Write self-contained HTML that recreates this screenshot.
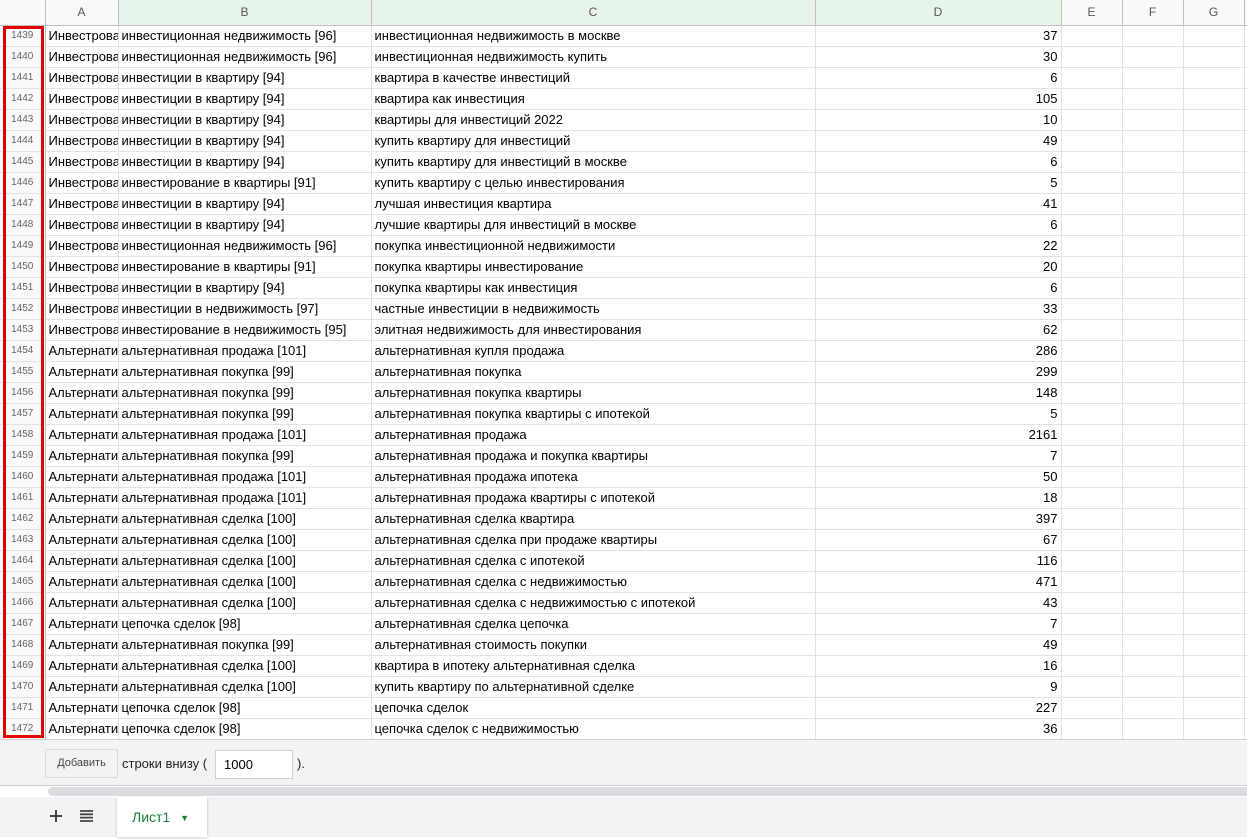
<!DOCTYPE html><html><head><meta charset="utf-8"><style>
*{margin:0;padding:0;box-sizing:border-box}
body{width:1247px;height:837px;overflow:hidden;background:#fff;font-family:"Liberation Sans",Arial,sans-serif;position:relative}
table{border-collapse:collapse;table-layout:fixed;position:absolute;left:0;top:0;width:1247px}
td{height:21px;border-right:1px solid #e2e3e3;border-bottom:1px solid #e2e3e3;font-size:13px;color:#000;white-space:nowrap;overflow:hidden;padding:0 3px;line-height:20px;vertical-align:middle}
td.n{font-size:10px;color:#666;text-align:center;background:#f8f9fa;border-right:1px solid #c0c0c0;padding:0;line-height:20px}
td.r{text-align:right}
tr.h td{height:25px;background:#f8f9fa;color:#555;text-align:center;font-size:12px;border-bottom:1px solid #c0c0c0;border-right:1px solid #c0c0c0;line-height:23px}
tr.h td.g{background:#e6f4ea}
td.a{padding:0 0 0 3px;text-overflow:clip}
#red{position:absolute;left:3px;top:26px;width:41px;height:712px;border:3px solid #e00000}
#bot{position:absolute;left:0;top:739px;width:1247px;height:47px;background:#f3f3f3;border-top:1px solid #d0d0d0;border-bottom:1px solid #d0d0d0}
#btn{position:absolute;left:45px;top:9px;width:73px;height:29px;border:1px solid #dadada;background:#f3f3f3;font-size:11px;color:#444;text-align:center;line-height:27px;border-radius:2px}
#t1{position:absolute;left:122px;top:16px;font-size:13px;color:#222}
#inp{position:absolute;left:215px;top:10px;width:78px;height:29px;border:1px solid #d0d0d0;background:#fff;font-size:13px;padding-left:8px;line-height:27px}
#t2{position:absolute;left:297px;top:16px;font-size:13px;color:#222}
#sc{position:absolute;left:0;top:786px;width:1247px;height:11px;background:#fff}
#bar{position:absolute;left:48px;top:1px;width:1199px;height:9px;background:#dadce0;border-radius:5px 0 0 5px}
#tabs{position:absolute;left:0;top:797px;width:1247px;height:40px;background:#f1f3f4}
#tab{position:absolute;left:117px;top:0;width:90px;height:40px;background:#fff;box-shadow:0 1px 3px rgba(0,0,0,.2);color:#188038;font-size:14px;line-height:40px;padding-left:15px}
</style></head><body>
<table>
<colgroup><col style="width:45px"><col style="width:73px"><col style="width:253px"><col style="width:444px"><col style="width:246px"><col style="width:61px"><col style="width:61px"><col style="width:61px"><col style="width:3px"></colgroup>
<tr class="h"><td class="n" style="background:#f8f9fa"></td><td>A</td><td class="g">B</td><td class="g">C</td><td class="g">D</td><td>E</td><td>F</td><td>G</td><td></td></tr>
<tr><td class="n">1439</td><td class="a">Инвестрова</td><td>инвестиционная недвижимость [96]</td><td>инвестиционная недвижимость в москве</td><td class="r">37</td><td></td><td></td><td></td><td></td></tr>
<tr><td class="n">1440</td><td class="a">Инвестрова</td><td>инвестиционная недвижимость [96]</td><td>инвестиционная недвижимость купить</td><td class="r">30</td><td></td><td></td><td></td><td></td></tr>
<tr><td class="n">1441</td><td class="a">Инвестрова</td><td>инвестиции в квартиру [94]</td><td>квартира в качестве инвестиций</td><td class="r">6</td><td></td><td></td><td></td><td></td></tr>
<tr><td class="n">1442</td><td class="a">Инвестрова</td><td>инвестиции в квартиру [94]</td><td>квартира как инвестиция</td><td class="r">105</td><td></td><td></td><td></td><td></td></tr>
<tr><td class="n">1443</td><td class="a">Инвестрова</td><td>инвестиции в квартиру [94]</td><td>квартиры для инвестиций 2022</td><td class="r">10</td><td></td><td></td><td></td><td></td></tr>
<tr><td class="n">1444</td><td class="a">Инвестрова</td><td>инвестиции в квартиру [94]</td><td>купить квартиру для инвестиций</td><td class="r">49</td><td></td><td></td><td></td><td></td></tr>
<tr><td class="n">1445</td><td class="a">Инвестрова</td><td>инвестиции в квартиру [94]</td><td>купить квартиру для инвестиций в москве</td><td class="r">6</td><td></td><td></td><td></td><td></td></tr>
<tr><td class="n">1446</td><td class="a">Инвестрова</td><td>инвестирование в квартиры [91]</td><td>купить квартиру с целью инвестирования</td><td class="r">5</td><td></td><td></td><td></td><td></td></tr>
<tr><td class="n">1447</td><td class="a">Инвестрова</td><td>инвестиции в квартиру [94]</td><td>лучшая инвестиция квартира</td><td class="r">41</td><td></td><td></td><td></td><td></td></tr>
<tr><td class="n">1448</td><td class="a">Инвестрова</td><td>инвестиции в квартиру [94]</td><td>лучшие квартиры для инвестиций в москве</td><td class="r">6</td><td></td><td></td><td></td><td></td></tr>
<tr><td class="n">1449</td><td class="a">Инвестрова</td><td>инвестиционная недвижимость [96]</td><td>покупка инвестиционной недвижимости</td><td class="r">22</td><td></td><td></td><td></td><td></td></tr>
<tr><td class="n">1450</td><td class="a">Инвестрова</td><td>инвестирование в квартиры [91]</td><td>покупка квартиры инвестирование</td><td class="r">20</td><td></td><td></td><td></td><td></td></tr>
<tr><td class="n">1451</td><td class="a">Инвестрова</td><td>инвестиции в квартиру [94]</td><td>покупка квартиры как инвестиция</td><td class="r">6</td><td></td><td></td><td></td><td></td></tr>
<tr><td class="n">1452</td><td class="a">Инвестрова</td><td>инвестиции в недвижимость [97]</td><td>частные инвестиции в недвижимость</td><td class="r">33</td><td></td><td></td><td></td><td></td></tr>
<tr><td class="n">1453</td><td class="a">Инвестрова</td><td>инвестирование в недвижимость [95]</td><td>элитная недвижимость для инвестирования</td><td class="r">62</td><td></td><td></td><td></td><td></td></tr>
<tr><td class="n">1454</td><td class="a">Альтернати</td><td>альтернативная продажа [101]</td><td>альтернативная купля продажа</td><td class="r">286</td><td></td><td></td><td></td><td></td></tr>
<tr><td class="n">1455</td><td class="a">Альтернати</td><td>альтернативная покупка [99]</td><td>альтернативная покупка</td><td class="r">299</td><td></td><td></td><td></td><td></td></tr>
<tr><td class="n">1456</td><td class="a">Альтернати</td><td>альтернативная покупка [99]</td><td>альтернативная покупка квартиры</td><td class="r">148</td><td></td><td></td><td></td><td></td></tr>
<tr><td class="n">1457</td><td class="a">Альтернати</td><td>альтернативная покупка [99]</td><td>альтернативная покупка квартиры с ипотекой</td><td class="r">5</td><td></td><td></td><td></td><td></td></tr>
<tr><td class="n">1458</td><td class="a">Альтернати</td><td>альтернативная продажа [101]</td><td>альтернативная продажа</td><td class="r">2161</td><td></td><td></td><td></td><td></td></tr>
<tr><td class="n">1459</td><td class="a">Альтернати</td><td>альтернативная покупка [99]</td><td>альтернативная продажа и покупка квартиры</td><td class="r">7</td><td></td><td></td><td></td><td></td></tr>
<tr><td class="n">1460</td><td class="a">Альтернати</td><td>альтернативная продажа [101]</td><td>альтернативная продажа ипотека</td><td class="r">50</td><td></td><td></td><td></td><td></td></tr>
<tr><td class="n">1461</td><td class="a">Альтернати</td><td>альтернативная продажа [101]</td><td>альтернативная продажа квартиры с ипотекой</td><td class="r">18</td><td></td><td></td><td></td><td></td></tr>
<tr><td class="n">1462</td><td class="a">Альтернати</td><td>альтернативная сделка [100]</td><td>альтернативная сделка квартира</td><td class="r">397</td><td></td><td></td><td></td><td></td></tr>
<tr><td class="n">1463</td><td class="a">Альтернати</td><td>альтернативная сделка [100]</td><td>альтернативная сделка при продаже квартиры</td><td class="r">67</td><td></td><td></td><td></td><td></td></tr>
<tr><td class="n">1464</td><td class="a">Альтернати</td><td>альтернативная сделка [100]</td><td>альтернативная сделка с ипотекой</td><td class="r">116</td><td></td><td></td><td></td><td></td></tr>
<tr><td class="n">1465</td><td class="a">Альтернати</td><td>альтернативная сделка [100]</td><td>альтернативная сделка с недвижимостью</td><td class="r">471</td><td></td><td></td><td></td><td></td></tr>
<tr><td class="n">1466</td><td class="a">Альтернати</td><td>альтернативная сделка [100]</td><td>альтернативная сделка с недвижимостью с ипотекой</td><td class="r">43</td><td></td><td></td><td></td><td></td></tr>
<tr><td class="n">1467</td><td class="a">Альтернати</td><td>цепочка сделок [98]</td><td>альтернативная сделка цепочка</td><td class="r">7</td><td></td><td></td><td></td><td></td></tr>
<tr><td class="n">1468</td><td class="a">Альтернати</td><td>альтернативная покупка [99]</td><td>альтернативная стоимость покупки</td><td class="r">49</td><td></td><td></td><td></td><td></td></tr>
<tr><td class="n">1469</td><td class="a">Альтернати</td><td>альтернативная сделка [100]</td><td>квартира в ипотеку альтернативная сделка</td><td class="r">16</td><td></td><td></td><td></td><td></td></tr>
<tr><td class="n">1470</td><td class="a">Альтернати</td><td>альтернативная сделка [100]</td><td>купить квартиру по альтернативной сделке</td><td class="r">9</td><td></td><td></td><td></td><td></td></tr>
<tr><td class="n">1471</td><td class="a">Альтернати</td><td>цепочка сделок [98]</td><td>цепочка сделок</td><td class="r">227</td><td></td><td></td><td></td><td></td></tr>
<tr><td class="n">1472</td><td class="a">Альтернати</td><td>цепочка сделок [98]</td><td>цепочка сделок с недвижимостью</td><td class="r">36</td><td></td><td></td><td></td><td></td></tr>
</table>
<div id="red"></div>
<div id="bot"><div id="btn">Добавить</div><div id="t1">строки внизу (</div><div id="inp">1000</div><div id="t2">).</div></div>
<div id="sc"><div id="bar"></div></div>
<div id="tabs">
<svg style="position:absolute;left:50px;top:13px" width="12" height="12"><path d="M6 0V12M0 6H12" stroke="#444" stroke-width="2"/></svg>
<svg style="position:absolute;left:80px;top:13px" width="13" height="12"><path d="M0 1H13M0 4.3H13M0 7.6H13M0 11H13" stroke="#444" stroke-width="1.8"/></svg>
<div id="tab">Лист1 <span style="font-size:9px;margin-left:6px;position:relative;top:-1px">▼</span></div>
</div>
</body></html>
